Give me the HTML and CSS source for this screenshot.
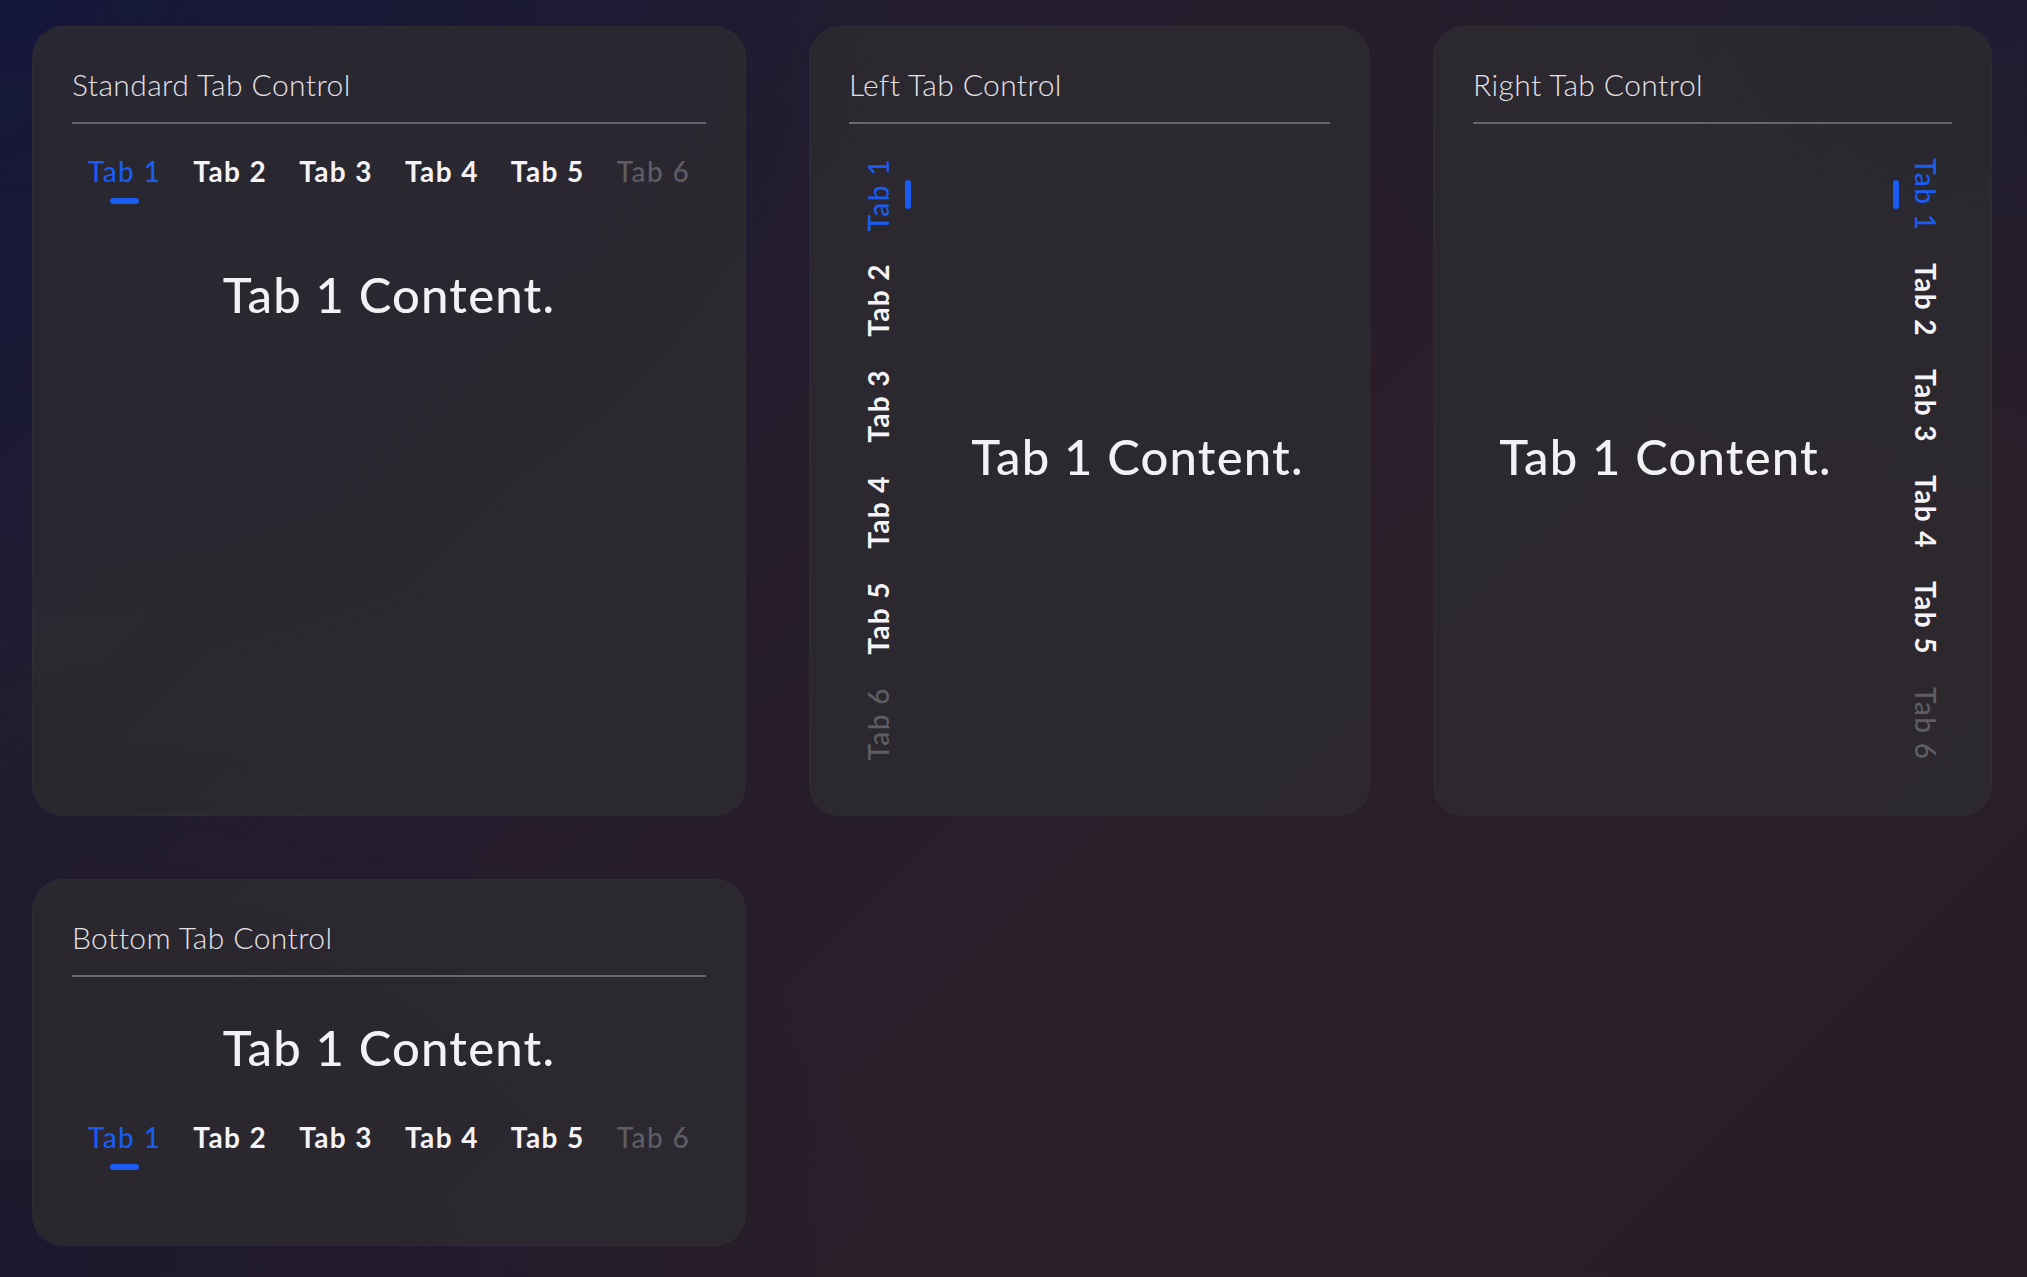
FILE: index.html
```html
<!DOCTYPE html>
<html lang="en">
<head>
<meta charset="utf-8">
<title>Tab Controls</title>
<link rel="stylesheet" href="styles.css">
</head>
<body>
<main class="page">
  <section class="card">
    <h2 class="card-title">Standard Tab Control</h2>
    <div class="tabs tabs-top">
      <div class="tab-list">
        <div class="tab active"><span class="tab-label">Tab 1</span><span class="tab-ind"></span></div>
        <div class="tab"><span class="tab-label">Tab 2</span><span class="tab-ind"></span></div>
        <div class="tab"><span class="tab-label">Tab 3</span><span class="tab-ind"></span></div>
        <div class="tab"><span class="tab-label">Tab 4</span><span class="tab-ind"></span></div>
        <div class="tab"><span class="tab-label">Tab 5</span><span class="tab-ind"></span></div>
        <div class="tab disabled"><span class="tab-label">Tab 6</span><span class="tab-ind"></span></div>
      </div>
      <div class="tab-panel">Tab 1 Content.</div>
    </div>
  </section>

  <section class="card">
    <h2 class="card-title">Left Tab Control</h2>
    <div class="tabs tabs-left">
      <div class="tab-list">
        <div class="tab active"><span class="tab-label">Tab 1</span><span class="tab-ind"></span></div>
        <div class="tab"><span class="tab-label">Tab 2</span><span class="tab-ind"></span></div>
        <div class="tab"><span class="tab-label">Tab 3</span><span class="tab-ind"></span></div>
        <div class="tab"><span class="tab-label">Tab 4</span><span class="tab-ind"></span></div>
        <div class="tab"><span class="tab-label">Tab 5</span><span class="tab-ind"></span></div>
        <div class="tab disabled"><span class="tab-label">Tab 6</span><span class="tab-ind"></span></div>
      </div>
      <div class="tab-panel">Tab 1 Content.</div>
    </div>
  </section>

  <section class="card">
    <h2 class="card-title">Right Tab Control</h2>
    <div class="tabs tabs-right">
      <div class="tab-panel">Tab 1 Content.</div>
      <div class="tab-list">
        <div class="tab active"><span class="tab-ind"></span><span class="tab-label">Tab 1</span></div>
        <div class="tab"><span class="tab-ind"></span><span class="tab-label">Tab 2</span></div>
        <div class="tab"><span class="tab-ind"></span><span class="tab-label">Tab 3</span></div>
        <div class="tab"><span class="tab-ind"></span><span class="tab-label">Tab 4</span></div>
        <div class="tab"><span class="tab-ind"></span><span class="tab-label">Tab 5</span></div>
        <div class="tab disabled"><span class="tab-ind"></span><span class="tab-label">Tab 6</span></div>
      </div>
    </div>
  </section>

  <section class="card">
    <h2 class="card-title">Bottom Tab Control</h2>
    <div class="tabs tabs-bottom">
      <div class="tab-panel">Tab 1 Content.</div>
      <div class="tab-list">
        <div class="tab active"><span class="tab-label">Tab 1</span><span class="tab-ind"></span></div>
        <div class="tab"><span class="tab-label">Tab 2</span><span class="tab-ind"></span></div>
        <div class="tab"><span class="tab-label">Tab 3</span><span class="tab-ind"></span></div>
        <div class="tab"><span class="tab-label">Tab 4</span><span class="tab-ind"></span></div>
        <div class="tab"><span class="tab-label">Tab 5</span><span class="tab-ind"></span></div>
        <div class="tab disabled"><span class="tab-label">Tab 6</span><span class="tab-ind"></span></div>
      </div>
    </div>
  </section>
</main>
</body>
</html>
```

FILE: styles.css
```css
* { box-sizing: border-box; }

html, body {
  margin: 0;
  height: 100%;
}

body {
  font-family: Lato, "Noto Sans", "DejaVu Sans", sans-serif;
  color: #f1f0f3;
  background:
    radial-gradient(ellipse 900px 700px at 0% 0%, rgba(20, 22, 58, 0.95) 0%, rgba(20, 22, 58, 0) 100%),
    radial-gradient(ellipse 700px 500px at 100% 0%, rgba(28, 28, 50, 0.9) 0%, rgba(28, 28, 50, 0) 100%),
    radial-gradient(ellipse 900px 600px at 0% 100%, rgba(28, 24, 46, 0.9) 0%, rgba(28, 24, 46, 0) 100%),
    linear-gradient(135deg, #1c1b34 0%, #271d2b 45%, #2b1f27 70%, #281d27 100%);
  overflow: hidden;
}

.page {
  display: grid;
  grid-template-columns: 714px 561px 559px;
  column-gap: 63px;
  row-gap: 63px;
  padding: 26px 32px;
  align-items: stretch;
}

.card {
  background: rgba(44, 42, 48, 0.86);
  border: 1px solid rgba(255, 255, 255, 0.025);
  border-radius: 32px;
  padding: 39px 39px;
  display: flex;
  flex-direction: column;
}

.card-title {
  margin: 0;
  padding: 1px 0 21px;
  border-bottom: 2px solid #68666d;
  font-size: 30px;
  line-height: 34px;
  font-weight: 300;
  color: #e4e2e7;
  letter-spacing: 0.4px;
}

/* ---- generic tab ---- */
.tabs {
  flex: 1;
  display: flex;
  padding-top: 18px;
}

.tab-list {
  display: flex;
}

.tab {
  display: flex;
  align-items: center;
  color: #f4f3f6;
  font-weight: 700;
  font-size: 28px;
  cursor: pointer;
}

.tab-label {
  line-height: 34px;
  white-space: nowrap;
  letter-spacing: 1.4px;
}

.tab-ind {
  display: block;
  border-radius: 3px;
  background: transparent;
}

.tab.active {
  color: #1a5cf2;
  font-weight: 500;
}

.tab.active .tab-ind {
  background: #1a5cf2;
}

.tab.disabled {
  color: #5f5d64;
  font-weight: 500;
}

.tab-panel {
  display: flex;
  justify-content: center;
  font-size: 49px;
  line-height: 60px;
  font-weight: 500;
  color: #f2f1f4;
  white-space: nowrap;
  letter-spacing: 1.2px;
}

/* ---- top & bottom ---- */
.tabs-top,
.tabs-bottom {
  flex-direction: column;
}

.tabs-top .tab-list,
.tabs-bottom .tab-list {
  justify-content: center;
}

.tabs-top .tab,
.tabs-bottom .tab {
  flex-direction: column;
  padding: 12px 16px;
}

.tabs-top .tab-ind,
.tabs-bottom .tab-ind {
  width: 29px;
  height: 6px;
  margin-top: 10px;
}

.tabs-top .tab-panel {
  padding-top: 48px;
}

.tabs-bottom {
  padding-bottom: 24px;
}

.tabs-bottom .tab-panel {
  padding: 22px 0 31px;
}

/* ---- left & right ---- */
.tabs-left .tab-list,
.tabs-right .tab-list {
  flex-direction: column;
}

.tabs-left .tab {
  padding: 16px 12px;
}

.tabs-right .tab {
  padding: 16px 9px 16px 15px;
}

.tabs-left .tab-label,
.tabs-right .tab-label {
  writing-mode: vertical-rl;
}

.tabs-left .tab-label {
  transform: rotate(180deg);
}

.tabs-left .tab-ind,
.tabs-right .tab-ind {
  width: 6px;
  height: 29px;
}

.tabs-left .tab-ind {
  margin-left: 10px;
}

.tabs-right .tab-ind {
  margin-right: 10px;
}

.tabs-right .tab-list {
  align-items: flex-end;
}

.tabs-left .tab-panel,
.tabs-right .tab-panel {
  flex: 1;
  align-items: center;
  padding-bottom: 6px;
}

.tabs-left .tab-panel {
  padding-left: 22px;
}

.tabs-right .tab-panel {
  padding-right: 20px;
}
```
